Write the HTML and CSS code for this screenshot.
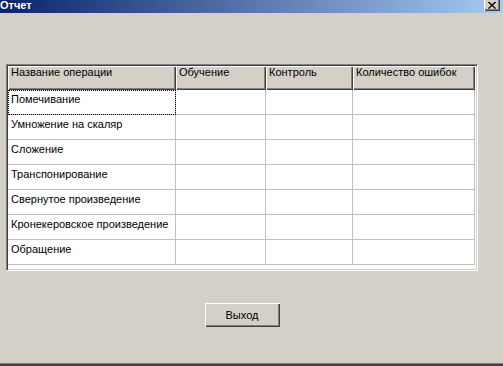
FILE: index.html
```html
<!DOCTYPE html>
<html lang="ru">
<head>
    <meta charset="UTF-8">
    <meta name="viewport" content="width=device-width, initial-scale=1.0">
    <title>Отчет</title>
    <link rel="stylesheet" href="styles.css">
</head>
<body>
    <div class="window">
        <div class="titlebar">
            <span class="title">Отчет</span>
            <span class="close-btn">
                <svg viewBox="0 0 16 11" width="16" height="11">
                    <path d="M4 2 L11 8.5 M5 2 L12 8.5 M11 2 L4 8.5 M12 2 L5 8.5" stroke="#000" stroke-width="1"></path>
                </svg>
            </span>
        </div>

        <div class="content">
            <div class="grid-frame">
                <div class="grid-row grid-head">
                    <div class="cell">Название операции</div>
                    <div class="cell">Обучение</div>
                    <div class="cell">Контроль</div>
                    <div class="cell">Количество ошибок</div>
                </div>
                <div class="grid-row">
                    <div class="cell focused">Помечивание</div>
                    <div class="cell"></div>
                    <div class="cell"></div>
                    <div class="cell"></div>
                </div>
                <div class="grid-row">
                    <div class="cell">Умножение на скаляр</div>
                    <div class="cell"></div>
                    <div class="cell"></div>
                    <div class="cell"></div>
                </div>
                <div class="grid-row">
                    <div class="cell">Сложение</div>
                    <div class="cell"></div>
                    <div class="cell"></div>
                    <div class="cell"></div>
                </div>
                <div class="grid-row">
                    <div class="cell">Транспонирование</div>
                    <div class="cell"></div>
                    <div class="cell"></div>
                    <div class="cell"></div>
                </div>
                <div class="grid-row">
                    <div class="cell">Свернутое произведение</div>
                    <div class="cell"></div>
                    <div class="cell"></div>
                    <div class="cell"></div>
                </div>
                <div class="grid-row">
                    <div class="cell">Кронекеровское произведение</div>
                    <div class="cell"></div>
                    <div class="cell"></div>
                    <div class="cell"></div>
                </div>
                <div class="grid-row">
                    <div class="cell">Обращение</div>
                    <div class="cell"></div>
                    <div class="cell"></div>
                    <div class="cell"></div>
                </div>
            </div>

            <div class="actions">
                <button class="btn" type="button">Выход</button>
            </div>
        </div>
    </div>
</body>
</html>
```

FILE: styles.css
```css
body {
    margin: 0;
    padding: 0;
    background-color: #d4d0c8;
    font-family: "Liberation Sans", Arial, sans-serif;
    font-size: 11px;
    color: #000;
}

.window {
    height: 366px;
    box-sizing: border-box;
    border-bottom: 2px solid #404040;
    box-shadow: inset 0 -1px #808080;
}

/* заголовок окна */
.titlebar {
    height: 13px;
    display: flex;
    justify-content: space-between;
    align-items: flex-start;
    background: linear-gradient(to right, #0a246a, #a6caf0);
    color: #fff;
}

.title {
    font-weight: bold;
    line-height: 11px;
}

.close-btn {
    width: 16px;
    height: 11px;
    margin-right: 3px;
    background-color: #d4d0c8;
    box-shadow: inset 1px 0 #fff, inset -1px -1px #404040, inset -2px -2px #808080;
}

.close-btn svg {
    display: block;
}

.content {
    padding: 51px 0 0 6px;
}

/* таблица */
.grid-frame {
    width: 468px;
    height: 203px;
    padding: 1px;
    border: 1px solid;
    border-color: #808080 #fff #fff #808080;
    background-color: #fff;
    box-shadow: inset 1px 1px #404040, inset -1px -1px #d4d0c8;
    background-clip: content-box;
}

.grid-row {
    display: grid;
    grid-template-columns: 168px 90px 87px 122px;
}

.cell {
    height: 25px;
    box-sizing: border-box;
    padding: 3px 0 0 3px;
    line-height: 13px;
    white-space: nowrap;
    overflow: hidden;
    border-right: 1px solid #c0c0c0;
    border-bottom: 1px solid #c0c0c0;
    background-color: #fff;
}

.grid-head .cell {
    height: 24px;
    padding-top: 0;
    border: none;
    background-color: #d4d0c8;
    box-shadow: inset 1px 1px #fff, inset -1px -1px #404040, inset -2px -2px #808080;
}

.cell.focused {
    outline: 1px dotted #000;
    outline-offset: -1px;
}

/* кнопка */
.actions {
    width: 472px;
    margin-top: 32px;
    display: flex;
    justify-content: center;
}

.btn {
    width: 75px;
    height: 24px;
    padding: 0;
    border: none;
    background-color: #d4d0c8;
    font-family: "Liberation Sans", Arial, sans-serif;
    font-size: 11px;
    color: #000;
    box-shadow: inset 1px 1px #fff, inset -1px -1px #404040, inset -2px -2px #808080;
}
```
